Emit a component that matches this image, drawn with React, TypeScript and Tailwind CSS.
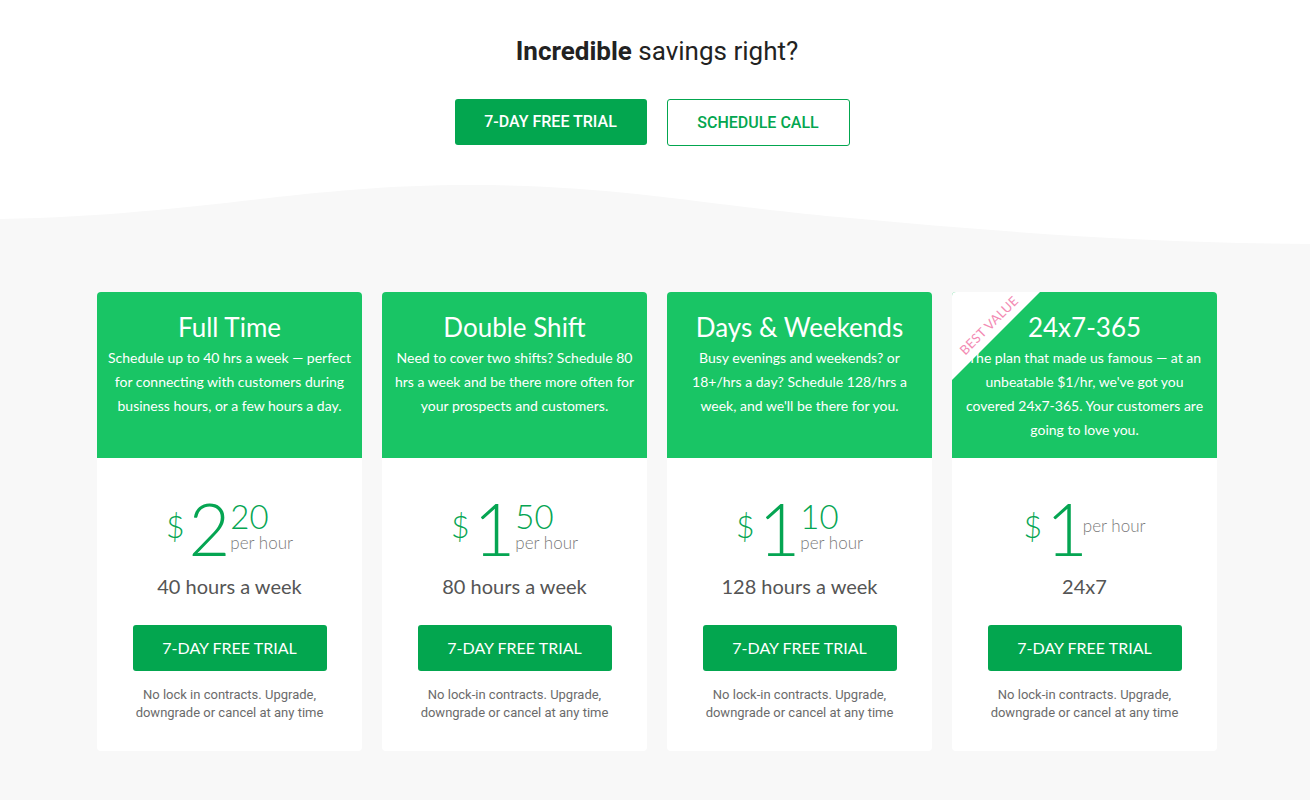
import React from "react"

const plans = [
  {
    title: "Full Time",
    desc: "Schedule up to 40 hrs a week — perfect for connecting with customers during business hours, or a few hours a day.",
    dollars: "2",
    cents: "20",
    hours: "40 hours a week",
    note: "No lock in contracts. Upgrade, downgrade or cancel at any time",
  },
  {
    title: "Double Shift",
    desc: "Need to cover two shifts? Schedule 80 hrs a week and be there more often for your prospects and customers.",
    dollars: "1",
    cents: "50",
    hours: "80 hours a week",
    note: "No lock-in contracts. Upgrade, downgrade or cancel at any time",
  },
  {
    title: "Days & Weekends",
    desc: "Busy evenings and weekends? or 18+/hrs a day? Schedule 128/hrs a week, and we'll be there for you.",
    dollars: "1",
    cents: "10",
    hours: "128 hours a week",
    note: "No lock-in contracts. Upgrade, downgrade or cancel at any time",
  },
  {
    title: "24x7-365",
    desc: "The plan that made us famous — at an unbeatable $1/hr, we've got you covered 24x7-365. Your customers are going to love you.",
    dollars: "1",
    cents: "",
    hours: "24x7",
    note: "No lock-in contracts. Upgrade, downgrade or cancel at any time",
    best: true,
  },
]

function PlanCard({ plan }: { plan: (typeof plans)[number] }) {
  return (
    <div className="relative w-[265px] h-[459px] rounded-[4px] overflow-hidden bg-white flex flex-col font-['Lato',sans-serif]">
      <div className="h-[166px] bg-[#19c565] text-white text-center px-2 pt-[19px]">
        <h3 className="text-[26px] leading-[32px]">{plan.title}</h3>
        <p className="mt-[3px] text-[14px] leading-[24px]">{plan.desc}</p>
      </div>

      {plan.best && (
        <div className="absolute left-0 top-0 w-[88px] h-[88px] bg-white [clip-path:polygon(0_0,100%_0,0_100%)]">
          <span className="absolute left-[-6px] top-[26px] w-[86px] text-center -rotate-45 text-[13px] leading-[15px] tracking-[0.3px] text-[#f38bb3]">
            BEST VALUE
          </span>
        </div>
      )}

      <div className="flex-1 flex flex-col items-center pt-[34px]">
        <div className="flex items-start h-[72px] text-[#05a552]">
          <span className="text-[32px] font-light leading-none mt-[18px] mr-[4px]">$</span>
          <span className="text-[72px] font-light leading-none">{plan.dollars}</span>
          {plan.cents ? (
            <div className="flex flex-col">
              <span className="text-[33px] font-light leading-[33px] mt-[8px]">{plan.cents}</span>
              <span className="text-[17px] font-light leading-[17px] text-[#7a7a7a] mt-[1px]">per hour</span>
            </div>
          ) : (
            <span className="ml-[-5px] mt-[25px] text-[17px] font-light leading-[17px] text-[#7a7a7a]">per hour</span>
          )}
        </div>
        <div className="mt-[10px] text-[20px] leading-[24px] text-[#555]">{plan.hours}</div>
        <button className="mt-[27px] w-[194px] h-[46px] rounded-[3px] bg-[#03a64f] text-white text-[16px]">
          7-DAY FREE TRIAL
        </button>
        <p className="mt-[15px] max-w-[200px] text-center text-[13px] leading-[18px] text-[#6b6b6b] font-['Roboto',sans-serif]">
          {plan.note}
        </p>
      </div>
    </div>
  )
}

export default function App() {
  return (
    <div className="w-full min-h-[800px] bg-[#f8f8f8] font-['Roboto',sans-serif]">
      <div className="bg-white pt-[35px] h-[180px]">
        <h2 className="text-center text-[26px] leading-[32px] text-[#222] pl-[4px]">
          <span className="font-bold">Incredible</span> savings right?
        </h2>
        <div className="mt-[32px] flex justify-center gap-5 pr-[6px]">
          <button className="w-[192px] h-[46px] rounded-[3px] bg-[#03a64f] text-white text-[16px] font-medium">
            7-DAY FREE TRIAL
          </button>
          <button className="w-[183px] h-[47px] rounded-[3px] border border-[#03a64f] bg-white text-[#03a64f] text-[16px] font-medium">
            SCHEDULE CALL
          </button>
        </div>
      </div>
      <svg className="block w-full h-[65px]" viewBox="0 0 1310 65" preserveAspectRatio="none">
        <rect x="0" y="0" width="1310" height="65" fill="#ffffff" />
        <path
          d="M0 39 C200 35 300 5 470 5 C620 5 700 25 850 38 C1000 52 1150 63 1310 64 V65 H0 Z"
          fill="#f8f8f8"
        />
      </svg>
      <div className="flex justify-center gap-5 pl-1 pt-[47px] pb-[49px]">
        {plans.map((p) => (
          <PlanCard key={p.title} plan={p} />
        ))}
      </div>
    </div>
  )
}
